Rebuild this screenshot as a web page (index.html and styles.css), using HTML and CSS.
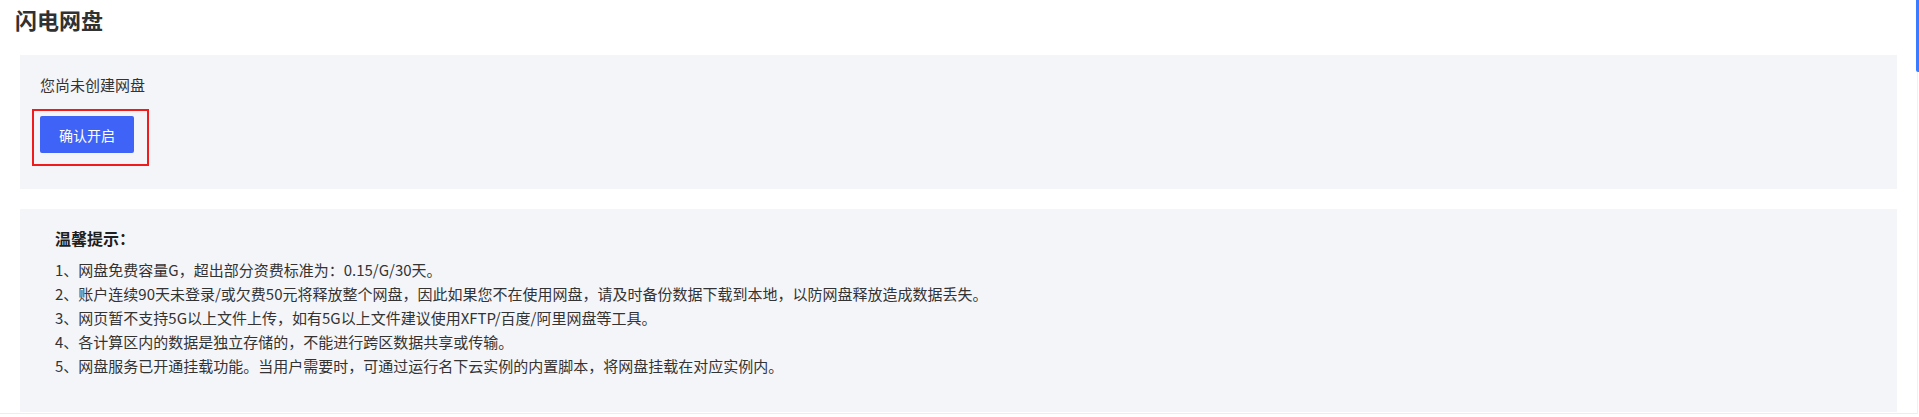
FILE: index.html
```html
<!DOCTYPE html>
<html lang="zh-CN">
<head>
<meta charset="utf-8">
<title>闪电网盘</title>
<link rel="stylesheet" href="styles.css">
</head>
<body>
<div class="page">
  <h1 class="title">闪电网盘</h1>
  <section class="panel panel-empty">
    <p class="empty-text">您尚未创建网盘</p>
    <div class="btn-wrap">
      <button class="btn-primary">确认开启</button>
    </div>
  </section>
  <section class="panel panel-tips">
    <h2 class="tips-title">温馨提示：</h2>
    <ul class="tips-list">
      <li>1、网盘免费容量G，超出部分资费标准为：0.15/G/30天。</li>
      <li>2、账户连续90天未登录/或欠费50元将释放整个网盘，因此如果您不在使用网盘，请及时备份数据下载到本地，以防网盘释放造成数据丢失。</li>
      <li>3、网页暂不支持5G以上文件上传，如有5G以上文件建议使用XFTP/百度/阿里网盘等工具。</li>
      <li>4、各计算区内的数据是独立存储的，不能进行跨区数据共享或传输。</li>
      <li>5、网盘服务已开通挂载功能。当用户需要时，可通过运行名下云实例的内置脚本，将网盘挂载在对应实例内。</li>
    </ul>
  </section>
</div>
<div class="side-tab"></div>
</body>
</html>
```

FILE: styles.css
```css
* { box-sizing: border-box; }
html, body {
  margin: 0;
  padding: 0;
  background: #ffffff;
  font-family: "Noto Sans CJK SC", "Noto Sans", sans-serif;
  color: #333333;
  overflow: hidden;
}
.page {
  width: 1918px;
  height: 414px;
  padding: 0 20px;
  border-right: 1px solid #f0f1f3;
  border-bottom: 1px solid #ebedf0;
}
.title {
  margin: 0 0 17px -5px;
  font-size: 22px;
  line-height: 38px;
  font-weight: 700;
  color: #303133;
}
.panel {
  background: #f4f5f9;
}
.panel-empty {
  padding: 18px 20px 36px;
  margin-bottom: 20px;
}
.empty-text {
  margin: 0 0 19px;
  font-size: 15px;
  line-height: 24px;
  color: #333333;
}
.btn-wrap {
  position: relative;
  width: 94px;
}
.btn-wrap::after {
  content: "";
  position: absolute;
  top: -7px;
  left: -8px;
  right: -15px;
  bottom: -13px;
  border: 2px solid #f01c1c;
  pointer-events: none;
}
.btn-primary {
  display: block;
  width: 94px;
  height: 37px;
  border: none;
  border-radius: 2px;
  background: #3f63f6;
  color: #ffffff;
  font-family: inherit;
  font-size: 14px;
  padding: 0;
  cursor: pointer;
}
.panel-tips {
  padding: 17px 35px 34px;
}
.tips-title {
  margin: 0 0 8px;
  font-size: 16px;
  line-height: 24px;
  font-weight: 700;
  color: #1f1f1f;
}
.tips-list {
  list-style: none;
  margin: 0;
  padding: 0;
}
.tips-list li {
  font-size: 15px;
  line-height: 24px;
  color: #333333;
}
.side-tab {
  position: absolute;
  top: 0;
  right: 0;
  width: 3px;
  height: 72px;
  background: #3b7bff;
  border-bottom-left-radius: 2px;
}
```
